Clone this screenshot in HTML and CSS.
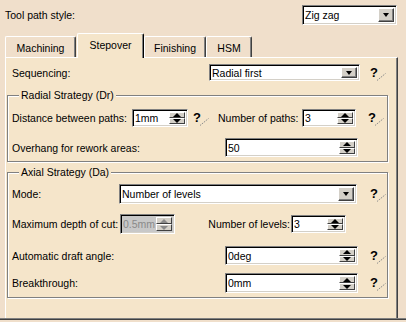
FILE: index.html
```html
<!DOCTYPE html>
<html lang="en">
<head>
    <meta charset="UTF-8">
    <title>Tool path style</title>
    <link rel="stylesheet" href="styles.css">
</head>
<body>
    <div class="top-row">
        <span>Tool path style:</span>
        <div class="combo combo-style">
            <span class="field-value">Zig zag</span>
            <span class="combo-btn"><i class="arrow-down"></i></span>
        </div>
    </div>

    <div class="tabs">
        <div class="tab tab-machining">Machining</div>
        <div class="tab tab-active">Stepover</div>
        <div class="tab tab-finishing">Finishing</div>
        <div class="tab tab-hsm">HSM</div>
    </div>

    <div class="panel">
        <div class="row row-seq">
            <span class="label w-197">Sequencing:</span>
            <div class="combo w-151">
                <span class="field-value">Radial first</span>
                <span class="combo-btn"><i class="arrow-down"></i></span>
            </div>
            <span class="help gap-10">?<svg class="help-tail" width="9" height="8" viewBox="0 0 9 8"><path d="M0 7.5 L8.5 0.5" stroke="#8c8c8c" stroke-width="1" stroke-dasharray="1.5 1"/></svg></span>
        </div>

        <div class="group group-radial">
            <span class="group-title">Radial Strategy (Dr)</span>
            <div class="row h-18">
                <span class="label w-120">Distance between paths:</span>
                <div class="spin w-56">
                    <span class="field-value">1mm</span>
                    <span class="spin-btns"><span><i class="arrow-up"></i></span><span><i class="arrow-down"></i></span></span>
                </div>
                <span class="help gap-5">?<svg class="help-tail" width="9" height="8" viewBox="0 0 9 8"><path d="M0 7.5 L8.5 0.5" stroke="#8c8c8c" stroke-width="1" stroke-dasharray="1.5 1"/></svg></span>
                <span class="label label-paths">Number of paths:</span>
                <div class="spin w-54">
                    <span class="field-value">3</span>
                    <span class="spin-btns"><span><i class="arrow-up"></i></span><span><i class="arrow-down"></i></span></span>
                </div>
                <span class="help gap-12">?<svg class="help-tail" width="9" height="8" viewBox="0 0 9 8"><path d="M0 7.5 L8.5 0.5" stroke="#8c8c8c" stroke-width="1" stroke-dasharray="1.5 1"/></svg></span>
            </div>
            <div class="row h-19 mt-11">
                <span class="label w-213">Overhang for rework areas:</span>
                <div class="spin w-133">
                    <span class="field-value">50</span>
                    <span class="spin-btns"><span><i class="arrow-up"></i></span><span><i class="arrow-down"></i></span></span>
                </div>
            </div>
        </div>

        <div class="group group-axial">
            <span class="group-title">Axial Strategy (Da)</span>
            <div class="row h-20">
                <span class="label w-107">Mode:</span>
                <div class="combo w-238">
                    <span class="field-value">Number of levels</span>
                    <span class="combo-btn"><i class="arrow-down"></i></span>
                </div>
                <span class="help gap-13">?<svg class="help-tail" width="9" height="8" viewBox="0 0 9 8"><path d="M0 7.5 L8.5 0.5" stroke="#8c8c8c" stroke-width="1" stroke-dasharray="1.5 1"/></svg></span>
            </div>
            <div class="row h-20 mt-10">
                <span class="label w-108">Maximum depth of cut:</span>
                <div class="spin spin-disabled w-55">
                    <span class="field-value">0.5mm</span>
                    <span class="spin-btns"><span><i class="arrow-up"></i></span><span><i class="arrow-down"></i></span></span>
                </div>
                <span class="label label-levels">Number of levels:</span>
                <div class="spin w-55 h-18">
                    <span class="field-value">3</span>
                    <span class="spin-btns"><span><i class="arrow-up"></i></span><span><i class="arrow-down"></i></span></span>
                </div>
            </div>
            <div class="row h-19 mt-12">
                <span class="label w-213">Automatic draft angle:</span>
                <div class="spin w-133">
                    <span class="field-value">0deg</span>
                    <span class="spin-btns"><span><i class="arrow-up"></i></span><span><i class="arrow-down"></i></span></span>
                </div>
                <span class="help gap-12">?<svg class="help-tail" width="9" height="8" viewBox="0 0 9 8"><path d="M0 7.5 L8.5 0.5" stroke="#8c8c8c" stroke-width="1" stroke-dasharray="1.5 1"/></svg></span>
            </div>
            <div class="row h-20 mt-8">
                <span class="label w-213">Breakthrough:</span>
                <div class="spin w-133">
                    <span class="field-value">0mm</span>
                    <span class="spin-btns"><span><i class="arrow-up"></i></span><span><i class="arrow-down"></i></span></span>
                </div>
                <span class="help gap-12">?<svg class="help-tail" width="9" height="8" viewBox="0 0 9 8"><path d="M0 7.5 L8.5 0.5" stroke="#8c8c8c" stroke-width="1" stroke-dasharray="1.5 1"/></svg></span>
            </div>
        </div>
    </div>

    <div class="frame-bottom"></div>
</body>
</html>
```

FILE: styles.css
```css
:root {
    --bg-outer: #f0dfcb;
    --bg-panel: #f5e5ca;
    --face: #d4d0c8;
    --shadow: #808080;
    --dark: #404040;
}

* {
    margin: 0;
    padding: 0;
    box-sizing: border-box;
}

body {
    width: 406px;
    height: 322px;
    overflow: hidden;
    background: var(--bg-outer);
    font-family: "Liberation Sans", Arial, sans-serif;
    font-size: 10.5px;
    color: #000;
}

/* top line */
.top-row {
    display: flex;
    align-items: center;
    justify-content: space-between;
    height: 20px;
    margin: 5px 9px 0 5px;
}

.combo-style {
    width: 95px;
    height: 20px;
}

/* tabs */
.tabs {
    display: flex;
    align-items: flex-end;
    height: 24px;
    margin-top: 8px;
    padding-left: 5px;
}

.tab {
    display: flex;
    align-items: center;
    justify-content: center;
    height: 21px;
    padding-top: 1px;
    border-top: 1px solid #fff;
    border-left: 1px solid #fff;
    border-right: 1px solid var(--dark);
    border-radius: 2px 2px 0 0;
    box-shadow: inset -1px 0 var(--shadow);
}

.tab-machining { width: 71px; }
.tab-finishing { width: 62px; }
.tab-hsm { width: 46px; }

.tab-active {
    position: relative;
    z-index: 1;
    width: 67px;
    height: 25px;
    margin: 0 0 -1px 1px;
    padding-top: 0;
    padding-bottom: 2px;
    background: var(--bg-panel);
    border-right-color: #000;
}

/* panel */
.panel {
    width: 393px;
    height: 261px;
    margin-left: 5px;
    background: var(--bg-panel);
    border-top: 1px solid #fff;
    border-left: 1px solid #fff;
    border-right: 1px solid var(--dark);
    box-shadow: inset -1px 0 var(--shadow);
}

.frame-bottom {
    height: 2px;
    background: var(--dark);
    border-top: 1px solid var(--shadow);
}

.row {
    display: flex;
    align-items: center;
}

.row-seq {
    height: 17px;
    margin-top: 6px;
    padding-left: 6px;
}

.label {
    flex: none;
    white-space: nowrap;
}

.label-paths {
    width: 84px;
    margin-left: 9px;
}

.label-levels {
    width: 116px;
    padding-right: 1px;
    text-align: right;
}

/* group boxes */
.group {
    position: relative;
    width: 381px;
    margin-left: 1px;
    padding-left: 4px;
    border: 1px solid var(--shadow);
    box-shadow: 1px 1px 0 #fff, inset 1px 1px 0 #fff;
}

.group-radial {
    margin-top: 14px;
    padding-top: 13px;
    padding-bottom: 4px;
}

.group-axial {
    margin-top: 10px;
    padding-top: 11px;
    padding-bottom: 4px;
}

.group-title {
    position: absolute;
    top: -7px;
    left: 11px;
    padding: 0 2px;
    line-height: 13px;
    background: var(--bg-panel);
}

/* fields */
.combo,
.spin {
    display: flex;
    flex: none;
    height: 100%;
    background: #fff;
    border: 1px solid;
    border-color: var(--shadow) #fff #fff var(--shadow);
    box-shadow: inset 1px 1px #000, inset -1px -1px var(--face);
    padding: 2px;
}

.field-value {
    flex: 1;
    display: flex;
    align-items: center;
    white-space: nowrap;
    overflow: hidden;
}

.combo-btn {
    display: flex;
    align-items: center;
    justify-content: center;
    width: 16px;
    background: var(--face);
    border: 1px solid;
    border-color: #fff var(--dark) var(--dark) #fff;
    box-shadow: inset -1px -1px var(--shadow);
}

.spin-btns {
    display: flex;
    flex-direction: column;
    width: 16px;
}

.spin-btns span {
    flex: 1;
    display: flex;
    align-items: center;
    justify-content: center;
    background: var(--face);
    border: 1px solid;
    border-color: #fff var(--dark) var(--dark) #fff;
}

.arrow-down,
.arrow-up {
    width: 0;
    height: 0;
    border-left: 4px solid transparent;
    border-right: 4px solid transparent;
}

.arrow-down { border-top: 4px solid #000; }
.arrow-up { border-bottom: 4px solid #000; }

.combo-btn .arrow-down {
    border-left-width: 3.5px;
    border-right-width: 3.5px;
}

.spin-disabled {
    background: #c8c8c8;
    color: #8a8a8a;
}

.spin-disabled .arrow-up { border-bottom-color: #8a8a8a; }
.spin-disabled .arrow-down { border-top-color: #8a8a8a; }

/* help icon */
.help {
    position: relative;
    flex: none;
    width: 16px;
    font-size: 13px;
    font-weight: bold;
    line-height: 16px;
}

.help-tail {
    position: absolute;
    left: 7px;
    top: 8px;
}

/* sizes */
.w-54 { width: 54px; }
.w-55 { width: 55px; }
.w-56 { width: 56px; }
.w-107 { width: 107px; }
.w-108 { width: 108px; }
.w-120 { width: 120px; }
.w-133 { width: 133px; }
.w-151 { width: 151px; }
.w-197 { width: 197px; }
.w-213 { width: 213px; }
.w-238 { width: 238px; }

.h-18 { height: 18px; }
.h-19 { height: 19px; }
.h-20 { height: 20px; }

.mt-8 { margin-top: 8px; }
.mt-10 { margin-top: 10px; }
.mt-11 { margin-top: 11px; }
.mt-12 { margin-top: 12px; }

.gap-5 { margin-left: 5px; }
.gap-10 { margin-left: 10px; }
.gap-12 { margin-left: 12px; }
.gap-13 { margin-left: 13px; }
```
